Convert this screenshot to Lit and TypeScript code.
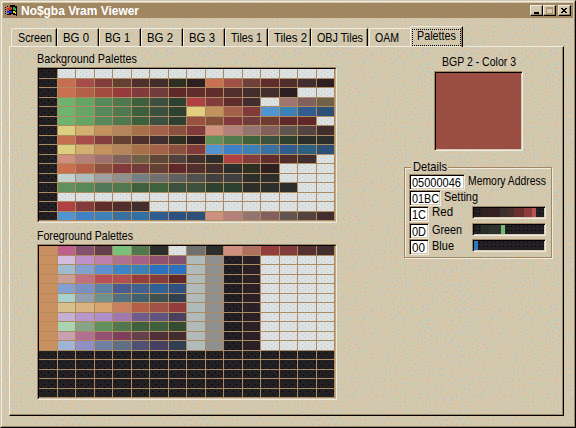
import { LitElement, html, svg, css } from "lit";
import { customElement, property } from "lit/decorators.js";

const W = "dde1e1";
const K = "222022";

const row = (s: string) =>
  s.split(" ").flatMap((t) => {
    const [c, n] = t.split("*");
    return Array(Number(n ?? 1)).fill(c === "W" ? W : c === "K" ? K : c) as string[];
  });

const greens = "K 6eb46e 64a464 56885a 4f7750 3c603c 3c5040 2e4030 ";
const warm = "K c66f50 a84c4a 823d3c 643f32 50302c 422e2e 2e2e22 ";
const sand = "K dcd080 d4b070 c4925c b4845c a87048 a46048 8c5040 ";
const tailSkin = "d09080 b4807c 947470 82605e 605450 544340 422e2e";

const background = [
  "K W*15",
  warm + "2e2022 c87050 a05044 70403c 602c2c 502e2c 422e2e 2e2022",
  "K c87050 b46048 a04c3e 983a3c 823a3c 723c3c 602828 602c2c*2 502e2c 422e2e*2 2e2022 W*2",
  greens + "b04042 823c3c 602c2c 422e2e W a07470 82605e 706048",
  greens + "e0d080 c4925c a46048 823a3c 5094d0 3c80b8 305c90 2c5078",
  greens + "985040 84503c 823a3c 723c3c 703c30 602828*2 W",
  sand + "823a3c " + tailSkin,
  warm + "2e2022 60905c 50784c 3f603c 3c5040 2e4030 2c2e2c*2",
  sand + "823a3c 5094d0 4080c4 3c80b8 3870a0 305c90 2c6080 2c5078",
  "K d09080 b4807c a07070 82605e 706048 604838 504040 422e2e 2c2e2c b04042 823c3c 602c2c 502e2c 422e2e W",
  "K c87050 b46048 8c5040 823a3c 723c3c 643f32 602828 502e2c 422e2e 2c2e2c 2e2e22 2e2022 W*3",
  "K c0d0cc b0bcbc a0a0a0 909090 708084 707070 606060 505050 404040*2 2c2e2c*2 W*3",
  "K 60905c 56885a 50785a 4f7750 3f603c*2 3c5040*2 2e4030*2 2c2e2c*3 W*2",
  "K W*15",
  "K b04042 823c3c 602c2c 502e2c 422e2e W*10",
  "K 5094d0 4080c4 4080b8 3870a0 3070a4 305c90 2c5080 2c5078 " + tailSkin,
].map(row);

const shared = " b0bcbc 909090 K 2c2028 W*4";
const foreground = [
  "c89060 c0608c 845070 64404c 78c07c 50784c 2c2e2c W 707070 2c2e2c d09080 b07060 943c3c 823c3c 543030 422e2e",
  ...[
    "d4bcdc c090c8 c080b0 b07090 a86088 905070 845070",
    "a0bcd0 84a0d0 6090d0 4084c8 3c80b8 2c70c0 2c70c0",
    "c8a098 c07080 b85058 b05050 983c3c 843c3c 602828",
    "84a0d0 7890c4 6080a4 485c90 406090 306094 305080",
    "a8d0cc 90a0b0 70908c 507080 406070 405050 304050",
    "d8c08c d8b480 d8a470 c88060 b46048 a05044 943c3c",
    "c4b0d4 b898cc b090c8 a078b0 705c8c 605480 4c4060",
    "a8d4b0 88a488 60905c 50784c 3f603c 3f603c 344c30",
    "c8a0b0 b07090 945070 7c405c 64404c 503038 402c2c",
    "a0b4d4 9090c4 7080a0 607084 505070 484060 304050",
  ].map((m) => "c89060 " + m + shared),
  ...Array(5).fill("K*16"),
].map(row);

/* Single line of UI text fitted to a given width. */
@customElement("ui-text")
class UiText extends LitElement {
  @property() text = "";
  @property({ type: Number }) w = 10;
  @property({ type: Boolean }) bold = false;
  static styles = css`
    :host { display: block; height: 12px; flex: none; }
    svg { display: block; overflow: visible; }
    text { font-family: "Liberation Sans", Arial, sans-serif; font-size: 12.6px; fill: currentColor; }
    .b { font-weight: 700; }
  `;
  render() {
    return html`<svg width=${this.w} height="12"><text class=${this.bold ? "b" : ""} x="0" y="10"
      textLength=${this.w} lengthAdjust="spacingAndGlyphs">${this.text}</text></svg>`;
  }
}

@customElement("palette-grid")
class PaletteGrid extends LitElement {
  @property({ attribute: false }) rows: string[][] = [];
  static styles = css`
    :host { display: block; box-sizing: border-box; width: 300px; height: 156px;
      border: 1px solid; border-color: #a18663 #ece8dc #ece8dc #a18663; }
    .in { border: 1px solid; border-color: #000 #c0a888 #d4c8b0 #000; display: grid;
      grid-template-columns: repeat(8, 19px 18px); grid-template-rows: repeat(8, 10px 9px); }
    .c { box-sizing: border-box; border-right: 1px solid #ac8a62; border-bottom: 1px solid #ac8a62; }
    .light { background-image: radial-gradient(circle at 1.5px 1.5px, #bccdca .6px, transparent .7px),
      radial-gradient(circle at 4.5px 3.5px, #bccdca .6px, transparent .7px); background-size: 6px 4px; }
    .dark { background-image: radial-gradient(circle at 2.5px 2.5px, #000 .6px, transparent .7px),
      radial-gradient(circle at 5.5px 5.5px, #000 .6px, transparent .7px); background-size: 7px 6px; }
    .tan { border-right-color: #be8c5e; border-bottom-color: #b88a58; }
  `;
  render() {
    return html`<div class="in">${this.rows.flat().map((c) => html`<div
      class="c ${c === W ? "light" : c === K ? "dark" : c === "c89060" ? "tan" : ""}"
      style="background-color:#${c}"></div>`)}</div>`;
  }
}

const speckle = (() => {
  let s = 4271;
  const rnd = () => (s = (s * 16807) % 2147483647) / 2147483647;
  const paths = ["", "", ""];
  for (let y = 0; y < 128; y += 2)
    for (let x = 0; x < 128; x += 4) {
      const r = rnd();
      const k = r < 0.48 ? 0 : r < 0.74 ? 1 : 2;
      const w = rnd() < 0.35 ? 2 : 1;
      paths[k] += `M${x + Math.floor(rnd() * 3)} ${y + Math.floor(rnd() * 2)}h${w}v1h-${w}z`;
    }
  return paths;
})();

const tabs: [string, number, number, number][] = [
  // label, tab width, text inset, text width
  ["Screen", 46, 6, 34], ["BG 0", 42, 5, 26], ["BG 1", 42, 5, 25], ["BG 2", 42, 5, 26],
  ["BG 3", 42, 5, 26], ["Tiles 1", 43, 5, 31], ["Tiles 2", 43, 5, 33], ["OBJ Tiles", 57, 5, 46],
];

@customElement("app-root")
class AppRoot extends LitElement {
  static styles = css`
    :host { display: block; position: relative; box-sizing: border-box; width: 576px; height: 428px;
      background: #d4c8b0; overflow: hidden; color: #000; }
    .tex { position: absolute; inset: 0; }
    .win { position: relative; box-sizing: border-box; height: 428px; border: 1px solid;
      border-color: #d4c8b0 #000 #000 #d4c8b0; }
    .frame { box-sizing: border-box; height: 426px; border: 1px solid;
      border-color: #efebe0 #a18663 #a18663 #efebe0; padding: 1px; }
    .bar { height: 15px; display: flex; color: #fff; padding-left: 2px;
      background: repeating-conic-gradient(#a2835f 0 25%, #a08963 0 50%) 0 0 / 4px 2px; }
    .bar ui-text { margin: 2px 0 0 4px; }
    .ico { margin-top: 1px; flex: none; }
    .btns { display: flex; margin: 2px 2px 0 auto; }
    .btn { box-sizing: border-box; width: 13px; height: 11px; background: #d4c8b0; border: 1px solid;
      border-color: #efebe0 #000 #000 #efebe0; box-shadow: inset -1px -1px #a18663; }
    .btn svg { display: block; }
    .btn.x { margin-left: 2px; }
    .tabs { display: flex; align-items: flex-end; height: 20px; margin: 8px 0 0 8px; }
    .tab { box-sizing: border-box; height: 18px; border: 1px solid #efebe0; border-right-color: #000;
      border-bottom: 0; border-radius: 2px 1px 0 0; box-shadow: inset -1px 0 #a18663; padding-top: 3px; flex: none; }
    .oam { width: 41px; border-right: 0; box-shadow: none; margin-left: 1px; padding-left: 5px; }
    .sel { position: relative; z-index: 1; width: 53px; height: 21px; margin-bottom: -1px; padding: 2px 0 0 1px; }
    .focus { box-sizing: border-box; width: 49px; height: 17px; border: 1px dotted #000; padding: 0 0 0 4px; }
    .panel { box-sizing: border-box; margin-left: 6px; width: 555px; height: 370px; border: 1px solid;
      border-color: #efebe0 #000 #000 #efebe0; box-shadow: inset -1px -1px #a18663; display: flex; }
    .left { width: 300px; margin-left: 27px; flex: none; }
    .left ui-text { margin-top: 6px; }
    .left palette-grid { margin-top: 2px; }
    .left palette-grid + ui-text { margin-top: 7px; }
    .right { margin-left: 67px; width: 149px; flex: none; }
    .right > ui-text { margin: 9px 0 0 38px; }
    .sunk { box-sizing: border-box; border: 1px solid; border-color: #a18663 #efebe0 #efebe0 #a18663;
      box-shadow: inset 1px 1px #000, inset -1px -1px #d4c8b0; }
    .swatch { width: 89px; height: 80px; margin: 3px 0 0 30px;
      background: repeating-conic-gradient(#9c5042 0 25%, #984c44 0 50%) 0 0 / 4px 2px; }
    .group { box-sizing: border-box; position: relative; width: 148px; height: 91px; margin-top: 16px;
      border: 1px solid #a18663; box-shadow: 1px 1px #efebe0, inset 1px 1px #efebe0; padding: 6px 0 0 4px; }
    .legend { position: absolute; left: 6px; top: -7px; padding: 0 1px 0 2px; background: #d4c8b0; }
    .line { display: flex; height: 16px; }
    .line.tall { height: 17px; }
    .field { background: #fff; height: 16px; padding: 2px 0 0 2px; flex: none; }
    .line > ui-text { margin: 1px 0 0 2.7px; }
    .line.tall > ui-text { margin-top: 0; }
    .meter { display: flex; width: 74px; height: 13px; padding: 1px; margin-left: auto; margin-right: 5px; background: #222022;
      background-image: radial-gradient(circle at 2.5px 2.5px, #000 .6px, transparent .7px); background-size: 4px 4px; }
    .seg { height: 9px; flex: none; }
  `;

  private meter(segs: [number, string][]) {
    return html`<div class="meter sunk">${segs.map(
      ([w, c]) => html`<div class="seg" style="width:${w}px;background:${c}"></div>`)}</div>`;
  }

  render() {
    const tint = ["#dcbf8a", "#b0d0a6", "#b4c4bc"];
    return html`
      <svg class="tex" width="576" height="428" shape-rendering="crispEdges">
        <defs><pattern id="sp" width="128" height="128" patternUnits="userSpaceOnUse">
          ${speckle.map((d, i) => svg`<path d=${d} fill=${tint[i]} />`)}
        </pattern></defs>
        <rect width="576" height="428" fill="url(#sp)" />
      </svg>
      <div class="win"><div class="frame">
        <div class="bar">
          <svg class="ico" width="12" height="12" shape-rendering="crispEdges">
            <path d="M5 1h5v1h2v10h-1v-1h-3v-1h-2v1h-2v-8h1z" fill="#000" />
            <path d="M0 3h1v1h-1zM2 2h1v1h-1zM0 5h1v1h-1zM0 7h1v1h-1zM0 9h1v1h-1zM2 10h2v1h-2z" fill="#000" />
            <path d="M2 4h2v2h-2zM4 3h3v3h-3z" fill="#e02828" />
            <path d="M8 3h2v1h1v3h-1v-1h-2z" fill="#20b040" />
            <path d="M2 7h2v2h-2zM4 7h3v2h-3z" fill="#2030f0" />
            <path d="M8 7h2v1h1v2h-1v-1h-2z" fill="#f0e020" />
          </svg>
          <ui-text text="No$gba Vram Viewer" w="118" bold></ui-text>
          <div class="btns">
            <div class="btn"><svg width="11" height="9" shape-rendering="crispEdges"><path d="M3 6h5v2h-5z" /></svg></div>
            <div class="btn"><svg width="11" height="9" shape-rendering="crispEdges"><path d="M2 1h7v7h-7zM3 3v4h5v-4z" fill="#b09468" fill-rule="evenodd" /></svg></div>
            <div class="btn x"><svg width="11" height="9" shape-rendering="crispEdges"><path d="M2 2h2v1h2v-1h2v1h-1v1h-1v1h1v1h1v1h-2v-1h-2v1h-2v-1h1v-1h1v-1h-1v-1h-1z" /></svg></div>
          </div>
        </div>
        <div class="tabs">
          ${tabs.map(([t, w, p, tw]) => html`<div class="tab" style="width:${w}px;padding-left:${p}px">
            <ui-text text=${t} w=${tw}></ui-text></div>`)}
          <div class="tab oam"><ui-text text="OAM" w="24"></ui-text></div>
          <div class="tab sel"><div class="focus"><ui-text text="Palettes" w="39"></ui-text></div></div>
        </div>
        <div class="panel">
          <div class="left">
            <ui-text text="Background Palettes" w="100"></ui-text>
            <palette-grid .rows=${background}></palette-grid>
            <ui-text text="Foreground Palettes" w="96"></ui-text>
            <palette-grid .rows=${foreground}></palette-grid>
          </div>
          <div class="right">
            <ui-text text="BGP 2 - Color 3" w="74"></ui-text>
            <div class="swatch sunk"></div>
            <div class="group">
              <div class="legend"><ui-text text="Details" w="34"></ui-text></div>
              <div class="line"><div class="field sunk" style="width:56px"><ui-text text="05000046" w="49"></ui-text></div>
                <ui-text text="Memory Address" w="78"></ui-text></div>
              <div class="line"><div class="field sunk" style="width:32px"><ui-text text="01BC" w="27"></ui-text></div>
                <ui-text text="Setting" w="34"></ui-text></div>
              <div class="line tall"><div class="field sunk" style="width:20px"><ui-text text="1C" w="14"></ui-text></div>
                <ui-text text="Red" w="21"></ui-text>
                ${this.meter([[7, "transparent"], [19, "#34201f"], [8, "#3c302e"], [6, "#4c302c"], [10, "#6a3030"], [8, "#8c3c3c"], [4, "#bc5454"]])}</div>
              <div class="line"><div class="field sunk" style="width:20px"><ui-text text="0D" w="14"></ui-text></div>
                <ui-text text="Green" w="30"></ui-text>
                ${this.meter([[7, "transparent"], [8, "#263024"], [12, "#303230"], [4, "#74b874"]])}</div>
              <div class="line"><div class="field sunk" style="width:20px"><ui-text text="00" w="13"></ui-text></div>
                <ui-text text="Blue" w="22"></ui-text>
                ${this.meter([[4, "#2c78bc"]])}</div>
            </div>
          </div>
        </div>
      </div></div>`;
  }
}
